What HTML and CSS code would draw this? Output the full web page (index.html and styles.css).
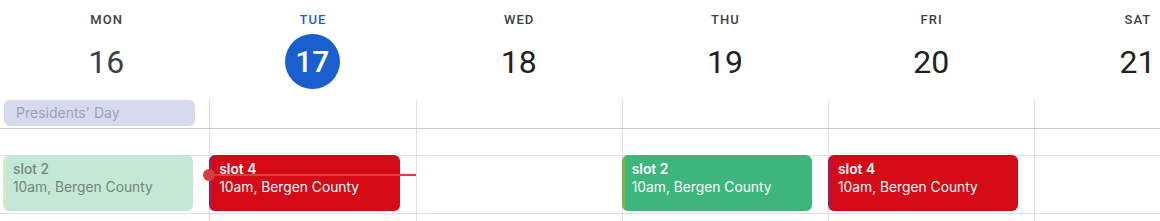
FILE: index.html
```html
<!DOCTYPE html>
<html lang="en">
<head>
<meta charset="utf-8">
<title>Week</title>
<link rel="stylesheet" href="styles.css">
</head>
<body>
<div class="cal">
  <div class="row head">
    <div class="day past"><div class="dname">MON</div><div class="dnum">16</div></div>
    <div class="day today"><div class="dname">TUE</div><div class="dnum"><span class="circle">17</span></div></div>
    <div class="day"><div class="dname">WED</div><div class="dnum">18</div></div>
    <div class="day"><div class="dname">THU</div><div class="dnum">19</div></div>
    <div class="day"><div class="dname">FRI</div><div class="dnum">20</div></div>
    <div class="day"><div class="dname">SAT</div><div class="dnum">21</div></div>
  </div>
  <div class="row allday">
    <div class="cell"><div class="chip">Presidents' Day</div></div>
    <div class="cell"></div>
    <div class="cell"></div>
    <div class="cell"></div>
    <div class="cell"></div>
    <div class="cell"></div>
  </div>
  <div class="row timed">
    <div class="cell">
      <div class="event faded"><div class="title">slot 2</div><div class="sub">10am, Bergen County</div></div>
    </div>
    <div class="cell now">
      <div class="event red"><div class="title">slot 4</div><div class="sub">10am, Bergen County</div></div>
      <div class="nowline"></div>
    </div>
    <div class="cell"></div>
    <div class="cell">
      <div class="event green"><div class="title">slot 2</div><div class="sub">10am, Bergen County</div></div>
    </div>
    <div class="cell">
      <div class="event red"><div class="title">slot 4</div><div class="sub">10am, Bergen County</div></div>
    </div>
    <div class="cell"></div>
  </div>
</div>
</body>
</html>
```
FILE: styles.css
```css
html, body {
  margin: 0;
  padding: 0;
  background: #fff;
}
body {
  width: 1160px;
  height: 221px;
  overflow: hidden;
  font-family: Roboto, "Liberation Sans", Arial, sans-serif;
  color: #3c4043;
}
.cal {
  width: 1160px;
  overflow: hidden;
}
.row {
  display: grid;
  grid-template-columns: repeat(6, 206.25px);
  padding-left: 3px;
}
.head {
  height: 100px;
}
.day {
  display: flex;
  flex-direction: column;
  align-items: center;
}
.dname {
  margin-top: 12px;
  height: 16px;
  line-height: 16px;
  font-size: 13px;
  font-weight: 500;
  letter-spacing: 1px;
  color: #3c4043;
  padding-left: 1px;
}
.dnum {
  margin-top: 6px;
  height: 56px;
  line-height: 56px;
  font-size: 32px;
  color: #202124;
}
.past .dnum {
  color: #3c4043;
}
.today .dname {
  color: #1a5fcf;
}
.circle {
  display: flex;
  align-items: center;
  justify-content: center;
  width: 55px;
  height: 55px;
  border-radius: 50%;
  background: #1a5fcf;
  color: #fff;
  font-size: 30px;
  font-weight: 500;
}
.allday {
  height: 28px;
  border-bottom: 1px solid #c9ccd3;
}
.cell + .cell {
  border-left: 1px solid #dde0eb;
}
.chip {
  margin: 0 14px 0 1px;
  height: 26px;
  line-height: 26px;
  padding-left: 12px;
  border-radius: 6px;
  background: #d6daee;
  color: #9ba1bb;
  font-family: Inter, Roboto, sans-serif;
  font-size: 14px;
}
.timed {
  height: 92px;
  background:
    linear-gradient(#dde0eb, #dde0eb) 0 26px / 100% 1px no-repeat,
    linear-gradient(#dde0eb, #dde0eb) 0 84px / 100% 1px no-repeat;
}
.timed .cell {
  position: relative;
}
.event {
  box-sizing: border-box;
  margin-top: 26px;
  height: 56px;
  width: calc(100% - 16px);
  border-radius: 6px;
  border-left: 3px solid transparent;
  padding: 5px 0 0 7px;
  font-family: Inter, Roboto, sans-serif;
  font-size: 13.8px;
  line-height: 18px;
  color: #fff;
}
.cell + .cell .event {
  margin-left: -1px;
  width: calc(100% - 15px);
}
.title {
  font-weight: 600;
}
.faded {
  background: #c4e8d6;
  border-left-color: #dde7c6;
  color: #72867b;
}
.faded .title {
  font-weight: 500;
}
.red {
  background: #d40a16;
  border-left-color: #a8185a;
}
.green {
  background: #3cb67d;
  border-left-color: #7cb342;
}
.nowline {
  position: absolute;
  top: 45px;
  left: -1px;
  right: 0;
  height: 2px;
  background: #dc3f3f;
}
.nowline::before {
  content: "";
  position: absolute;
  left: -6px;
  top: -5px;
  width: 12px;
  height: 12px;
  border-radius: 50%;
  background: #d93c3c;
}
```
